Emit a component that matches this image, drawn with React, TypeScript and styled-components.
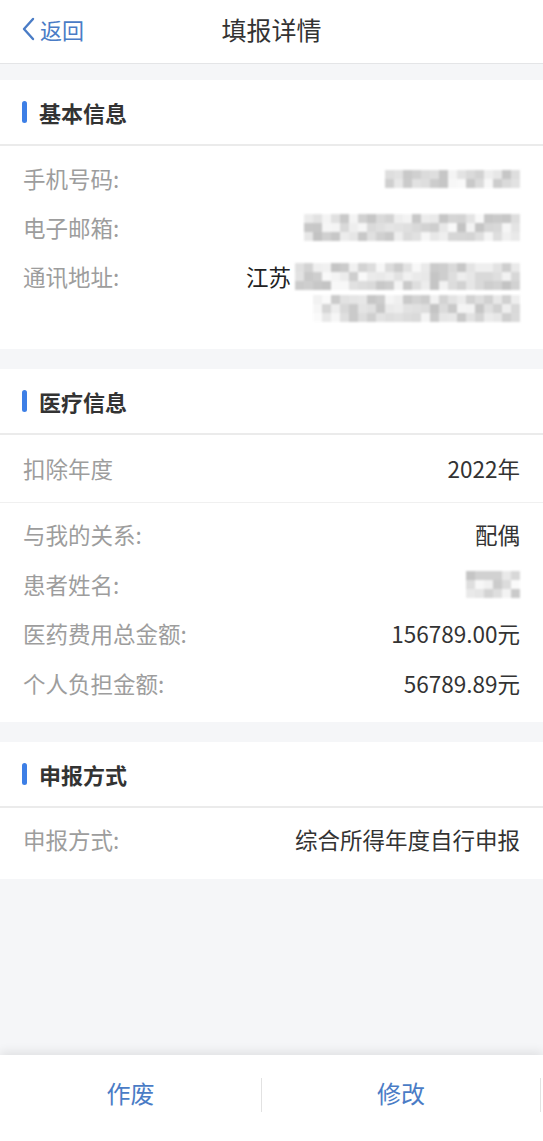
import React from 'react';
import styled, { createGlobalStyle } from 'styled-components';

const GlobalStyle = createGlobalStyle`
    html, body {
        margin: 0;
        padding: 0;
        background: #f5f6f8;
        font-family: "Noto Sans CJK SC", "Noto Sans", sans-serif;
    }
    * {
        box-sizing: border-box;
    }
`;

const BLUE = '#4a7cc6';

interface InfoItem {
    label: string
    value?: React.ReactNode
}

// 打码块（隐私信息）
const mosaic = (cols: number, rows: number, seed: number) => {
    const cells: number[] = [];
    let s = seed;
    for (let i = 0; i < cols * rows; i++) {
        s = (s * 9301 + 49297) % 233280;
        cells.push(s / 233280);
    }
    return cells;
};

const Mosaic = ({ cols, rows, seed, size = 9 }: { cols: number, rows: number, seed: number, size?: number }) => (
    <MosaicGrid $cols={cols} $size={size}>
        {mosaic(cols, rows, seed).map((v, i) => {
            const c = Math.round(180 + v * 70);
            return <MosaicCell key={i} style={{ background: `rgb(${c},${c},${c})` }} />;
        })}
    </MosaicGrid>
);

const basicInfo: InfoItem[] = [
    { label: '手机号码:', value: <Mosaic cols={15} rows={2} seed={7} /> },
    { label: '电子邮箱:', value: <Mosaic cols={24} rows={3} seed={13} /> },
];

const medicalInfo: InfoItem[] = [
    { label: '与我的关系:', value: '配偶' },
    { label: '患者姓名:', value: <Mosaic cols={6} rows={3} seed={21} /> },
    { label: '医药费用总金额:', value: '156789.00元' },
    { label: '个人负担金额:', value: '56789.89元' },
];

export default function App() {
    return (
        <Page>
            <GlobalStyle />
            <NavBar>
                <Back>
                    <svg width="14" height="24" viewBox="0 0 14 24" fill="none">
                        <path d="M12 2 L3 12 L12 22" stroke={BLUE} strokeWidth="2.4" strokeLinecap="round" strokeLinejoin="round" />
                    </svg>
                    返回
                </Back>
                <NavTitle>填报详情</NavTitle>
                <span />
            </NavBar>

            <Content>
                <Section>
                    <SectionHeader>基本信息</SectionHeader>
                    <SectionBody $top={8} $bottom={16}>
                        {basicInfo.map(item => (
                            <Row key={item.label}>
                                <Label>{item.label}</Label>
                                <Value>{item.value}</Value>
                            </Row>
                        ))}
                        <Row>
                            <Label>通讯地址:</Label>
                            <ValueLines>
                                <AddressLine>
                                    <span>江苏</span>
                                    <Mosaic cols={25} rows={3} seed={33} />
                                </AddressLine>
                                <AddressLine>
                                    <Mosaic cols={23} rows={3} seed={41} />
                                </AddressLine>
                            </ValueLines>
                        </Row>
                    </SectionBody>
                </Section>

                <Section $gap={15}>
                    <SectionHeader>医疗信息</SectionHeader>
                    <YearRow>
                        <Label>扣除年度</Label>
                        <Value>2022年</Value>
                    </YearRow>
                    <SectionBody $top={7} $bottom={14}>
                        {medicalInfo.map(item => (
                            <Row key={item.label} $tall>
                                <Label>{item.label}</Label>
                                <Value>{item.value}</Value>
                            </Row>
                        ))}
                    </SectionBody>
                </Section>

                <Section $gap={20}>
                    <SectionHeader>申报方式</SectionHeader>
                    <SectionBody $top={7} $bottom={15}>
                        <Row>
                            <Label>申报方式:</Label>
                            <Value>综合所得年度自行申报</Value>
                        </Row>
                    </SectionBody>
                </Section>
            </Content>

            <BottomBar>
                <ActionButton>作废</ActionButton>
                <ActionButton $divider>修改</ActionButton>
            </BottomBar>
        </Page>
    );
}

const Page = styled.div`
    min-height: 100vh;
    display: flex;
    flex-direction: column;
    background: #f5f6f8;
`;

const NavBar = styled.header`
    height: 64px;
    background: #fff;
    border-bottom: 1px solid #e4e5e7;
    display: grid;
    grid-template-columns: 1fr auto 1fr;
    align-items: center;
    padding: 0 21px 5px;
`;

const Back = styled.div`
    display: flex;
    align-items: center;
    gap: 5px;
    font-size: 22px;
    color: ${BLUE};
`;

const NavTitle = styled.h1`
    margin: 0;
    font-size: 25px;
    font-weight: 400;
    color: #333;
`;

const Content = styled.main`
    flex: 1;
    padding-top: 16px;
    display: flex;
    flex-direction: column;
`;

const Section = styled.section<{ $gap?: number }>`
    background: #fff;
    & + & {
        margin-top: ${({ $gap }) => $gap ?? 17}px;
    }
`;

const SectionHeader = styled.h2`
    margin: 0;
    height: 66px;
    border-bottom: 2px solid #ebebeb;
    display: flex;
    align-items: center;
    gap: 12px;
    padding: 0 22px;
    font-size: 22px;
    font-weight: 700;
    color: #333;
    &::before {
        content: '';
        width: 5px;
        height: 22px;
        border-radius: 3px;
        background: #3d7fe6;
    }
`;

const SectionBody = styled.div<{ $top: number, $bottom: number }>`
    padding: ${({ $top }) => $top}px 0 ${({ $bottom }) => $bottom}px;
`;

const Row = styled.div<{ $tall?: boolean }>`
    display: flex;
    justify-content: space-between;
    align-items: flex-start;
    padding: 10px 23px;
    line-height: ${({ $tall }) => ($tall ? 29.5 : 29)}px;
    font-size: 22.5px;
`;

const YearRow = styled(Row)`
    align-items: center;
    height: 68px;
    padding-top: 0;
    padding-bottom: 0;
    border-bottom: 1px solid #f0f0f0;
`;

const Label = styled.span`
    color: #9d9d9d;
    white-space: nowrap;
`;

const Value = styled.span`
    color: #333;
    display: flex;
    align-items: center;
    min-height: 29px;
`;

const ValueLines = styled.div`
    display: flex;
    flex-direction: column;
    align-items: flex-end;
    gap: 3px;
    color: #222;
`;

const AddressLine = styled.div`
    display: flex;
    align-items: center;
    justify-content: flex-end;
    gap: 4px;
    height: 29px;
`;

const MosaicGrid = styled.div<{ $cols: number, $size: number }>`
    display: grid;
    grid-template-columns: repeat(${({ $cols }) => $cols}, ${({ $size }) => $size}px);
    grid-auto-rows: ${({ $size }) => $size}px;
    filter: blur(1.2px);
    opacity: 0.8;
`;

const MosaicCell = styled.div``;

const BottomBar = styled.footer`
    height: 86px;
    background: #fff;
    box-shadow: 0 -3px 10px rgba(0, 0, 0, 0.09);
    display: grid;
    grid-template-columns: 261px 280px;
    align-items: start;
    padding-top: 23px;
`;

const ActionButton = styled.button<{ $divider?: boolean }>`
    border: none;
    background: none;
    font-family: inherit;
    font-size: 24px;
    line-height: 30px;
    color: ${BLUE};
    height: 34px;
    padding: 0 0 4px;
    border-left: ${({ $divider }) => ($divider ? '1px solid #e2e2e2' : 'none')};
    border-right: ${({ $divider }) => ($divider ? '1px solid #e2e2e2' : 'none')};
`;
